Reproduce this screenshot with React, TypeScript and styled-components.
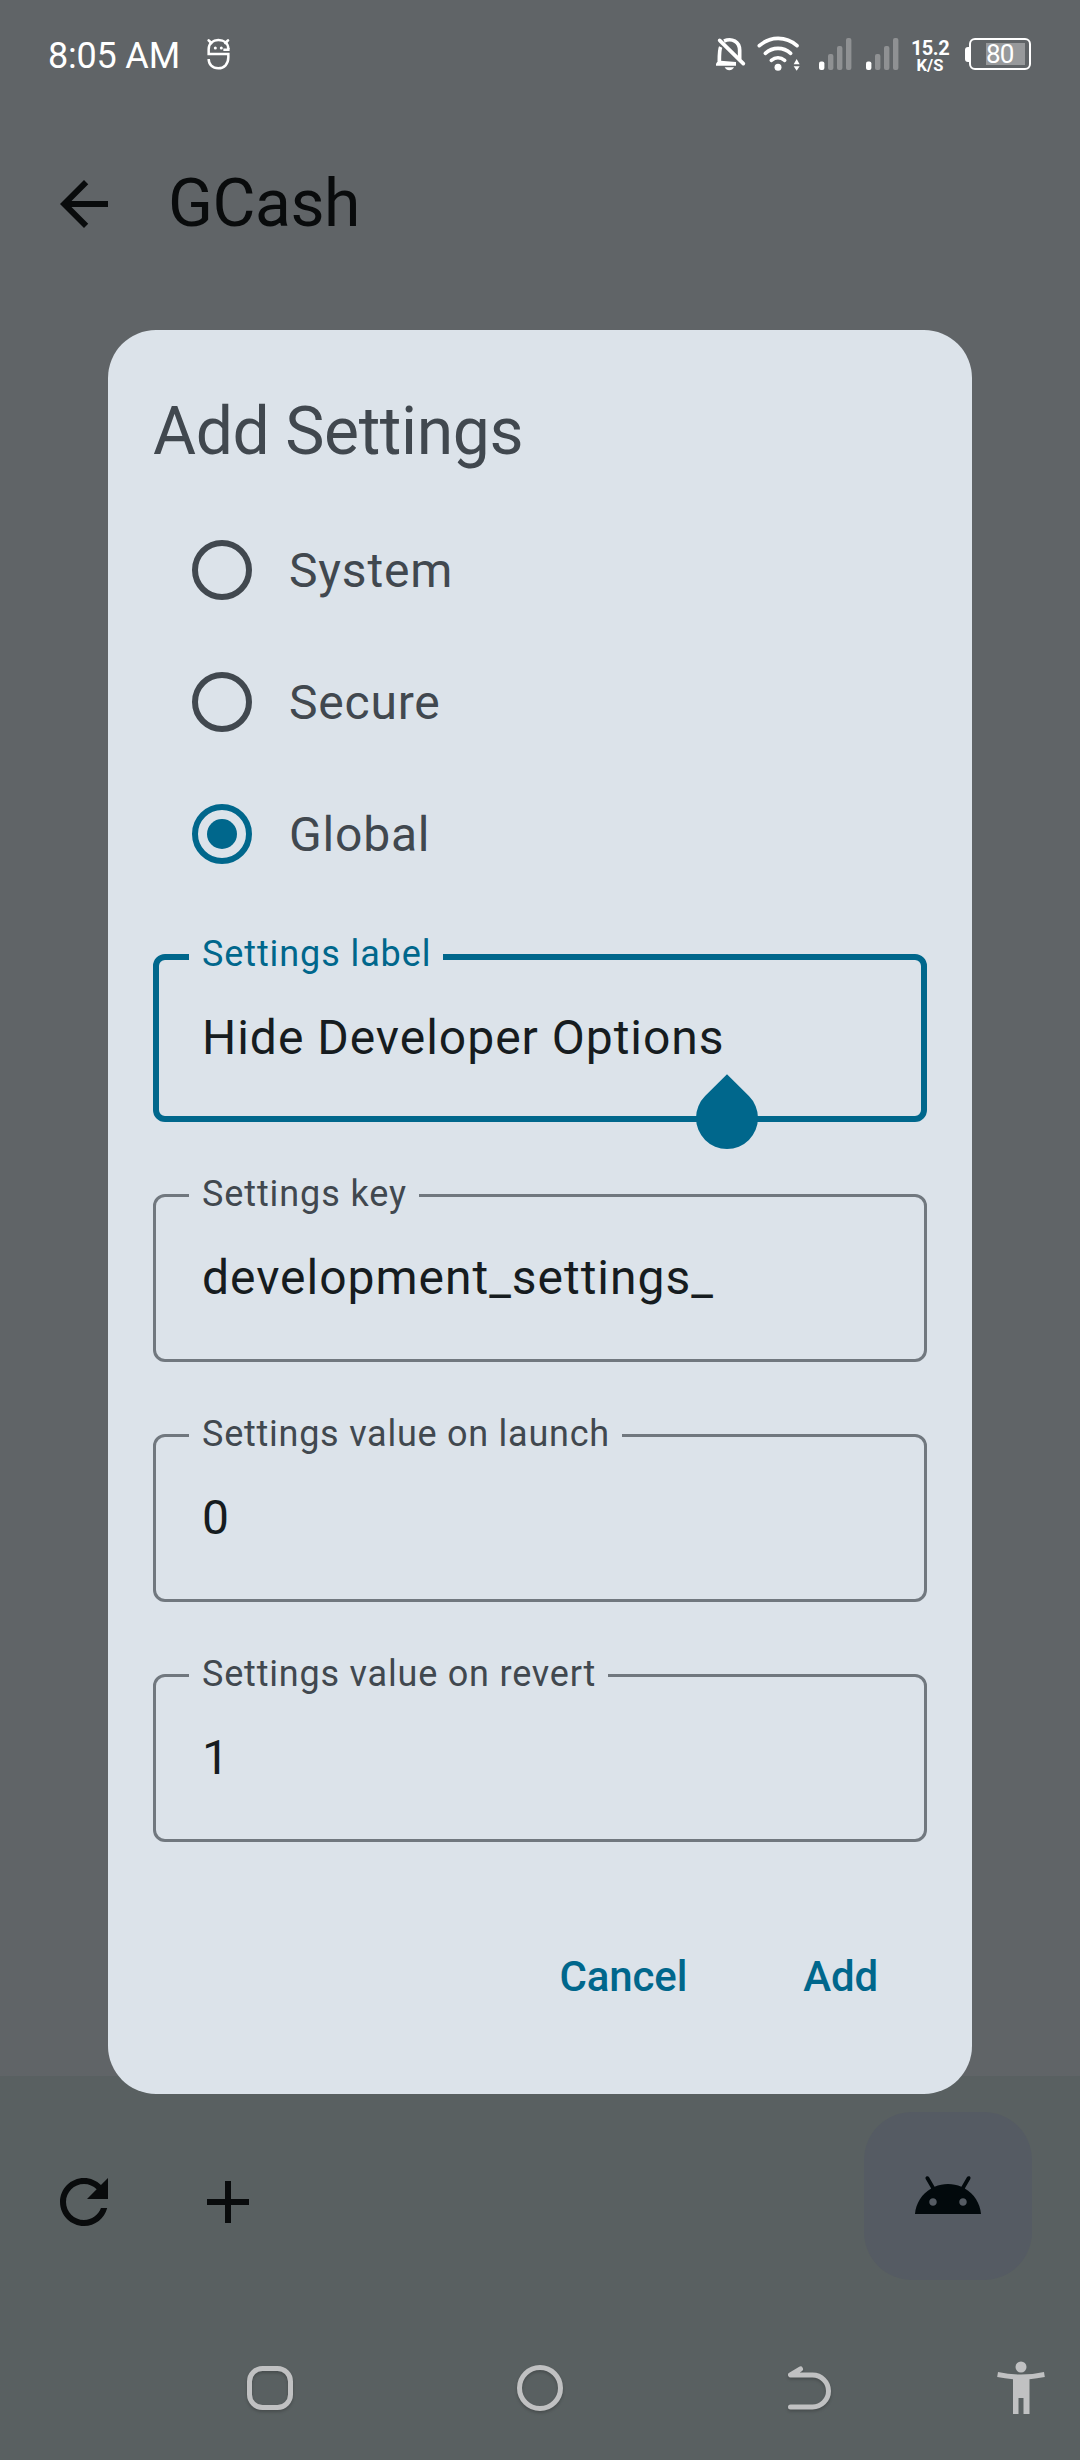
import React from "react";
import styled, { createGlobalStyle } from "styled-components";

const color = {
  page: "#606467",
  bar: "#596061",
  fab: "#555b63",
  ink: "#090b0c",
  dialog: "#dce3ea",
  text: "#41484f",
  strong: "#161c20",
  primary: "#00678c",
  outline: "#71787f",
  nav: "#c0c1c2",
};

const GlobalStyle = createGlobalStyle`
  * { box-sizing: border-box; }
  body { margin: 0; background: ${color.page}; }
`;

const Screen = styled.div`
  position: relative;
  width: 1080px;
  height: 2460px;
  display: flex;
  flex-direction: column;
  background: ${color.page};
  font-family: Roboto, "Liberation Sans", sans-serif;
  overflow: hidden;
`;

const StatusBar = styled.header`
  height: 108px;
  padding: 0 49px 0 48px;
  display: flex;
  align-items: center;
  justify-content: space-between;
  color: #fff;
`;

const StatusGroup = styled.div<{ $gap?: number; $before?: number }>`
  display: flex;
  align-items: center;
  gap: ${(p) => p.$gap ?? 0}px;
  margin-left: ${(p) => p.$before ?? 0}px;
`;

const Clock = styled.span`
  font-size: 36px;
  line-height: 44px;
  letter-spacing: -0.2px;
  padding-top: 3px;
`;

const Speed = styled.div`
  width: 38px;
  margin: 5px 16px 0 12px;
  display: flex;
  flex-direction: column;
  align-items: center;
  font-weight: 700;
`;

const SpeedValue = styled.span`
  font-size: 20px;
  line-height: 19px;
  letter-spacing: -0.5px;
`;

const SpeedUnit = styled.span`
  font-size: 16.5px;
  line-height: 16px;
`;

const Battery = styled.div`
  display: flex;
  align-items: center;
`;

const BatteryNub = styled.span`
  width: 4px;
  height: 15px;
  border-radius: 3px 0 0 3px;
  background: #fff;
`;

const BatteryBody = styled.span`
  width: 62px;
  height: 32px;
  padding: 0 4px 0 15px;
  border: 2px solid #fff;
  border-radius: 6px;
  display: flex;
  align-items: center;
`;

const BatteryLevel = styled.span`
  width: 40px;
  height: 22px;
  background: #97999b;
  font-size: 26px;
  line-height: 22px;
  letter-spacing: -0.8px;
`;

const AppBar = styled.div`
  height: 192px;
  padding-left: 48px;
  display: flex;
  align-items: center;
  gap: 48px;
`;

const AppTitle = styled.h1`
  margin: 0;
  font-size: 66px;
  line-height: 84px;
  font-weight: 400;
  letter-spacing: -0.45px;
  color: ${color.ink};
`;

const Body = styled.div`
  flex: 1;
`;

const BottomArea = styled.footer`
  height: 384px;
  background: ${color.bar};
`;

const ActionRow = styled.div`
  height: 240px;
  padding: 0 48px;
  display: flex;
  align-items: center;
  gap: 72px;
`;

const Fab = styled.button`
  width: 168px;
  height: 168px;
  margin-left: auto;
  padding: 0;
  border: 0;
  border-radius: 48px;
  display: grid;
  place-items: center;
  background: ${color.fab};
`;

const IconButton = styled.button<{ $drop?: number }>`
  width: 72px;
  height: 72px;
  padding: 0;
  border: 0;
  margin-top: ${(p) => p.$drop ?? 0}px;
  background: none;
  display: grid;
  place-items: center;
`;

const NavRow = styled.nav`
  height: 144px;
  padding: 0 0 0 130px;
  display: grid;
  grid-template-columns: 280px 260px 280px 130px;
  align-items: center;
  justify-items: center;
`;

const NavIcon = styled.svg<{ $shadow?: boolean; $before?: number }>`
  overflow: visible;
  margin-left: ${(p) => p.$before ?? 0}px;
  filter: ${(p) => (p.$shadow ? "drop-shadow(0 2px 1.5px rgba(0,0,0,.2))" : "none")};
`;

const Dialog = styled.section`
  position: absolute;
  left: 108px;
  top: 330px;
  width: 864px;
  height: 1764px;
  padding: 60px 45px 0;
  border-radius: 48px;
  background: ${color.dialog};
  display: flex;
  flex-direction: column;
`;

const DialogTitle = styled.h2`
  margin: 0 0 30px;
  font-size: 66px;
  line-height: 84px;
  font-weight: 400;
  letter-spacing: -0.4px;
  color: ${color.text};
`;

const RadioRow = styled.div`
  height: 132px;
  padding-left: 39px;
  display: flex;
  align-items: center;
  gap: 37px;
`;

const RadioRing = styled.span<{ $on: boolean }>`
  width: 60px;
  height: 60px;
  border: 6px solid ${(p) => (p.$on ? color.primary : color.text)};
  border-radius: 50%;
  display: grid;
  place-items: center;
`;

const RadioDot = styled.span`
  width: 30px;
  height: 30px;
  border-radius: 50%;
  background: ${color.primary};
`;

const RadioLabel = styled.span`
  padding-top: 2px;
  font-size: 48px;
  line-height: 72px;
  letter-spacing: 0.8px;
  color: ${color.text};
`;

const Fields = styled.div`
  margin-top: 54px;
  display: flex;
  flex-direction: column;
  gap: 72px;
`;

const FieldBox = styled.div<{ $focus: boolean }>`
  position: relative;
  height: 168px;
  border: ${(p) => (p.$focus ? 6 : 3)}px solid ${(p) => (p.$focus ? color.primary : color.outline)};
  border-radius: 12px;
  padding-left: ${(p) => (p.$focus ? 43 : 46)}px;
  display: flex;
  align-items: center;
`;

const FieldLabel = styled.label<{ $focus: boolean; $track: number }>`
  position: absolute;
  left: ${(p) => (p.$focus ? 30 : 33)}px;
  top: ${(p) => (p.$focus ? -30 : -27)}px;
  padding: 0 12px 0 13px;
  background: ${color.dialog};
  font-size: 36px;
  line-height: 48px;
  letter-spacing: ${(p) => p.$track}px;
  white-space: nowrap;
  color: ${(p) => (p.$focus ? color.primary : color.text)};
`;

const FieldValue = styled.span`
  font-size: 48px;
  line-height: 72px;
  letter-spacing: 0.98px;
  white-space: nowrap;
  color: ${color.strong};
`;

const CursorHandle = styled.span`
  position: absolute;
  left: 537px;
  top: 127px;
  width: 62px;
  height: 62px;
  border-radius: 0 50% 50% 50%;
  background: ${color.primary};
  transform: rotate(45deg);
`;

const Actions = styled.div`
  margin-top: 75px;
  height: 120px;
  padding-right: 13px;
  display: flex;
  justify-content: flex-end;
  gap: 44px;
`;

const TextButton = styled.button`
  padding: 0 36px;
  border: 0;
  background: none;
  font-family: inherit;
  font-size: 42px;
  font-weight: 500;
  letter-spacing: -0.15px;
  line-height: 60px;
  color: ${color.primary};
`;

const MaterialIcon = ({ d, fill = color.ink }: { d: string; fill?: string }) => (
  <svg width="72" height="72" viewBox="0 0 24 24" fill={fill}>
    <path d={d} />
  </svg>
);

const icons = {
  back: "M20 11H7.83l5.59-5.59L12 4l-8 8 8 8 1.41-1.41L7.83 13H20v-2z",
  refresh:
    "M17.65 6.35C16.2 4.9 14.21 4 12 4c-4.42 0-7.99 3.58-7.99 8s3.57 8 7.99 8c3.73 0 6.84-2.55 7.73-6h-2.08c-.82 2.33-3.04 4-5.65 4-3.31 0-6-2.69-6-6s2.69-6 6-6c1.66 0 3.14.69 4.22 1.78L13 11h7V4l-2.35 2.35z",
  add: "M19 13h-6v6h-2v-6H5v-2h6V5h2v6h6v2z",
  android:
    "M17.6 9.48l1.84-3.18c.16-.31.04-.69-.26-.85-.29-.15-.65-.06-.83.22l-1.88 3.24c-2.86-1.21-6.08-1.21-8.94 0L5.65 5.67c-.19-.29-.58-.38-.87-.2-.28.18-.37.54-.22.83L6.4 9.48C3.3 11.25 1.28 14.44 1 18h22c-.28-3.56-2.3-6.75-5.4-8.52zM7 15.25c-.69 0-1.25-.56-1.25-1.25s.56-1.25 1.25-1.25 1.25.56 1.25 1.25-.56 1.25-1.25 1.25zm10 0c-.69 0-1.25-.56-1.25-1.25s.56-1.25 1.25-1.25 1.25.56 1.25 1.25-.56 1.25-1.25 1.25z",
};

const FaceIcon = () => (
  <svg width="24" height="34" viewBox="0 0 72 102" fill="none" stroke="#fff" strokeWidth="7.5">
    <path d="M67 37C67 18 53 9 37 9S8 19 8 37v14h59v10c0 20-12 33-30 33S8 82 8 66" />
    <path d="M67 33v5H52" />
    <path d="M8 10l8 8M66 10l-8 8" strokeLinecap="round" strokeWidth="8" />
    <circle cx="28" cy="33" r="4.5" fill="#fff" stroke="none" />
    <circle cx="46" cy="33" r="4.5" fill="#fff" stroke="none" />
  </svg>
);

const BellOffIcon = () => (
  <svg width="30" height="34" viewBox="78 50 90 102" fill="none" stroke="#fff" strokeWidth="11">
    <path d="M102 62c24-10 47 2 47 28v27" />
    <path d="M92 80c-4 8-4 14-4 42" />
    <path d="M84 121h8l46 4v11H78v-6z" fill="#fff" stroke="none" />
    <path d="M89 60l71 70" strokeLinecap="round" />
    <path d="M104 141h28c-3 6-8 9-14 9s-11-3-14-9z" fill="#fff" stroke="none" />
  </svg>
);

const WifiIcon = () => (
  <svg width="44" height="36" viewBox="202 46 132 108" fill="none" stroke="#fff" strokeWidth="11" strokeLinecap="round">
    <path d="M209 75c33-29 80-29 113 0" />
    <path d="M227 98c22-20 54-20 76 0" />
    <path d="M245 119c12-10 28-10 40 0" />
    <circle cx="265" cy="140" r="10.5" fill="#fff" stroke="none" />
    <path d="M312 131l9-16 9 16zM312 137h18l-9 13z" fill="#fff" stroke="none" />
  </svg>
);

const SignalIcon = () => (
  <svg width="33" height="32" viewBox="0 0 33 32">
    <rect x="0" y="23.5" width="5.4" height="8.5" rx="2" fill="#fff" />
    <rect x="9" y="16" width="5.4" height="16" rx="2" fill="#8f9193" />
    <rect x="18" y="8" width="5.4" height="24" rx="2" fill="#8f9193" />
    <rect x="27" y="0" width="5.4" height="32" rx="2" fill="#8f9193" />
  </svg>
);

const scopes = ["System", "Secure", "Global"];

const fields = [
  { label: "Settings label", value: "Hide Developer Options", track: 0.9 },
  { label: "Settings key", value: "development_settings_", track: 0.9 },
  { label: "Settings value on launch", value: "0", track: 0.75 },
  { label: "Settings value on revert", value: "1", track: 0.8 },
];

const Radio = ({ label, on }: { label: string; on: boolean }) => (
  <RadioRow>
    <RadioRing $on={on}>{on && <RadioDot />}</RadioRing>
    <RadioLabel>{label}</RadioLabel>
  </RadioRow>
);

type FieldProps = { label: string; value: string; track: number; focus: boolean };

const Field = ({ label, value, track, focus }: FieldProps) => (
  <FieldBox $focus={focus}>
    <FieldLabel $focus={focus} $track={track}>
      {label}
    </FieldLabel>
    <FieldValue>{value}</FieldValue>
    {focus && <CursorHandle />}
  </FieldBox>
);

export default function App() {
  return (
    <Screen>
      <GlobalStyle />
      <StatusBar>
        <StatusGroup $gap={26}>
          <Clock>8:05 AM</Clock>
          <FaceIcon />
        </StatusGroup>
        <StatusGroup>
          <StatusGroup $gap={11}>
            <BellOffIcon />
            <WifiIcon />
          </StatusGroup>
          <StatusGroup $gap={14} $before={18}>
            <SignalIcon />
            <SignalIcon />
          </StatusGroup>
          <Speed>
            <SpeedValue>15.2</SpeedValue>
            <SpeedUnit>K/S</SpeedUnit>
          </Speed>
          <Battery>
            <BatteryNub />
            <BatteryBody>
              <BatteryLevel>80</BatteryLevel>
            </BatteryBody>
          </Battery>
        </StatusGroup>
      </StatusBar>

      <AppBar>
        <IconButton>
          <MaterialIcon d={icons.back} />
        </IconButton>
        <AppTitle>GCash</AppTitle>
      </AppBar>

      <Body />

      <BottomArea>
        <ActionRow>
          <IconButton $drop={12}>
            <MaterialIcon d={icons.refresh} />
          </IconButton>
          <IconButton $drop={12}>
            <MaterialIcon d={icons.add} />
          </IconButton>
          <Fab>
            <MaterialIcon d={icons.android} fill="#02090c" />
          </Fab>
        </ActionRow>
        <NavRow>
          <NavIcon $shadow width="46" height="44" viewBox="0 0 46 44" fill="none" stroke={color.nav} strokeWidth="5">
            <rect x="2.5" y="2.5" width="41" height="39" rx="13" />
          </NavIcon>
          <NavIcon $shadow width="46" height="46" viewBox="0 0 46 46" fill="none" stroke={color.nav} strokeWidth="5">
            <circle cx="23" cy="23" r="20.5" />
          </NavIcon>
          <NavIcon
            $shadow
            width="42"
            height="44"
            viewBox="0 0 42 44"
            fill="none"
            stroke={color.nav}
            strokeWidth="5"
            strokeLinecap="round"
            strokeLinejoin="round"
          >
            <path d="M11.500 3L1.500 9H23.500a16 16 0 0 1 0 32H1.500" />
          </NavIcon>
          <NavIcon $before={11} width="48" height="54" viewBox="0 0 48 54" fill={color.nav}>
            <circle cx="24" cy="6" r="5.5" />
            <path d="M1 11q23 5 46 0l.8 5q-8 1.600-15.300 2.300V53H26.500V37h-5v16H16V18.300Q8 17.600.2 16z" />
          </NavIcon>
        </NavRow>
      </BottomArea>

      <Dialog>
        <DialogTitle>Add Settings</DialogTitle>
        {scopes.map((s) => (
          <Radio key={s} label={s} on={s === "Global"} />
        ))}
        <Fields>
          {fields.map((f, i) => (
            <Field key={f.label} {...f} focus={i === 0} />
          ))}
        </Fields>
        <Actions>
          <TextButton>Cancel</TextButton>
          <TextButton>Add</TextButton>
        </Actions>
      </Dialog>
    </Screen>
  );
}
